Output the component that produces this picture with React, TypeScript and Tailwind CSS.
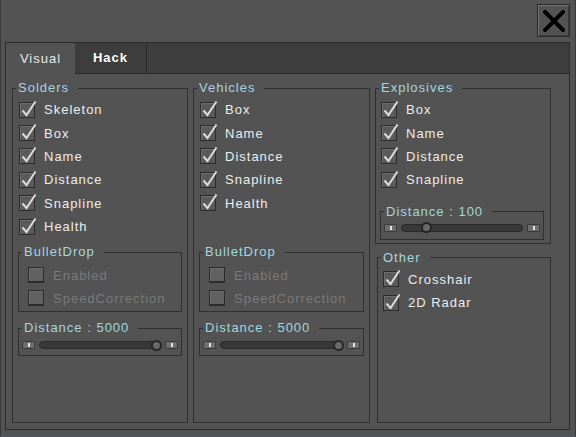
import type { ReactNode } from "react";

const font = { fontFamily: '"Liberation Sans", Arial, sans-serif' };

function Check({ label, checked = true, disabled = false }: { label: string; checked?: boolean; disabled?: boolean }) {
  return (
    <div className="flex items-center h-[23.4px] pl-[1px]">
      <div
        className={`relative w-[16px] h-[16px] border border-[#2c2c2c] ${disabled ? "bg-[#616161] border-b-2" : "bg-[#5a5a5a]"} shadow-[inset_1px_1px_0_#6e6e6e]`}
      >
        {checked && (
          <svg className="absolute left-0 top-0 overflow-visible" width="16" height="16" viewBox="0 0 16 16">
            <path d="M2.5 7.5 L6.5 12 L15.5 -1.5" fill="none" stroke="#dcdcdc" strokeWidth="2" />
          </svg>
        )}
      </div>
      <span className={`ml-[9px] text-[13px] tracking-[1px] leading-none ${disabled ? "text-[#7a7a7a]" : "text-[#ededed]"}`}>
        {label}
      </span>
    </div>
  );
}

function Group({ title, className = "", inner = "", children }: { title: string; className?: string; inner?: string; children: ReactNode }) {
  return (
    <fieldset className={`border border-[#303030] ${className}`}>
      <legend className="ml-[3px] pl-[2px] pr-[9px] text-[13px] leading-[16px] tracking-[1px] text-[#a3d6de]">{title}</legend>
      <div className={inner}>{children}</div>
    </fieldset>
  );
}

function EndButton() {
  return (
    <div className="w-[13px] h-[8px] bg-[#6e6e6e] border border-[#3a3a3a] rounded-[1px] flex items-center justify-center">
      <div className="w-[2px] h-[4px] bg-[#e4e4e4]" />
    </div>
  );
}

function Slider({ pos }: { pos: number }) {
  return (
    <div className="flex items-center h-[12px] px-[3px]">
      <EndButton />
      <div className="relative flex-1 mx-[4px] h-[8px] rounded-full bg-[#383838] border border-[#2a2a2a]">
        <div
          className="absolute top-1/2 w-[11px] h-[11px] -mt-[5.5px] -ml-[5.5px] rounded-full bg-[#6a6a6a] border-2 border-[#262626]"
          style={{ left: `${pos}%` }}
        />
      </div>
      <EndButton />
    </div>
  );
}

function BulletDrop() {
  return (
    <Group title="BulletDrop" className="mt-[6px]" inner="px-[8px] pt-[3px] pb-[1px]">
      <Check label="Enabled" checked={false} disabled />
      <Check label="SpeedCorrection" checked={false} disabled />
    </Group>
  );
}

function DistanceBox({ label, pos, className = "mt-[8px]", inner = "pt-[3px] pb-[4px]" }: { label: string; pos: number; className?: string; inner?: string }) {
  return (
    <Group title={label} className={className} inner={inner}>
      <Slider pos={pos} />
    </Group>
  );
}

export default function App() {
  return (
    <div className="w-[576px] h-[437px] bg-[#535353] border-l border-r border-[#3a3a3a] border-b-2 border-b-[#4c5862] flex flex-col" style={font}>
      <div className="h-[42px] flex justify-end items-start pt-[4px] pr-[5px]">
        <div className="w-[33px] h-[33px] border border-[#2a2a2a] shadow-[inset_1px_1px_0_#727272,inset_-1px_-1px_0_#3a3a3a] flex items-center justify-center">
          <svg width="22" height="22" viewBox="0 0 22 22">
            <path d="M2 2 L20 20 M20 2 L2 20" stroke="#000" strokeWidth="4" strokeLinecap="square" />
          </svg>
        </div>
      </div>
      <div className="ml-[4px] mr-[5px] h-[388px] border border-[#2b2b2b] flex flex-col">
        <div className="h-[31px] flex bg-[#3d3d3d]">
          <div className="w-[69px] bg-[#535353] flex items-center justify-center text-[13px] tracking-[1px] text-[#e8e8e8]">Visual</div>
          <div className="w-[72px] border-r border-b border-[#2b2b2b] flex items-center justify-center text-[13px] font-bold tracking-[1px] text-white">Hack</div>
          <div className="flex-1 border-b border-[#2b2b2b]" />
        </div>
        <div className="flex-1 flex pl-[6px] pt-[6px] pb-[6px] gap-[5px]">
          <Group title="Solders" className="w-[176px]" inner="px-[5px] pt-[2px]">
            <Check label="Skeleton" />
            <Check label="Box" />
            <Check label="Name" />
            <Check label="Distance" />
            <Check label="Snapline" />
            <Check label="Health" />
            <BulletDrop />
            <DistanceBox label="Distance : 5000" pos={97} />
          </Group>
          <Group title="Vehicles" className="w-[177px]" inner="px-[5px] pt-[2px]">
            <Check label="Box" />
            <Check label="Name" />
            <Check label="Distance" />
            <Check label="Snapline" />
            <Check label="Health" />
            <div className="h-[23.4px]" />
            <BulletDrop />
            <DistanceBox label="Distance : 5000" pos={97} />
          </Group>
          <div className="w-[176px] flex flex-col">
            <Group title="Explosives" inner="px-[4px] pt-[2px] pb-[3px]">
              <Check label="Box" />
              <Check label="Name" />
              <Check label="Distance" />
              <Check label="Snapline" />
              <DistanceBox label="Distance : 100" pos={20} className="mt-[12px] mr-[2px]" inner="pt-[2px] pb-[5px]" />
            </Group>
            <Group title="Other" className="flex-1 mt-[6px] ml-[2px]" inner="px-[4px] pt-[2px]">
              <Check label="Crosshair" />
              <Check label="2D Radar" />
            </Group>
          </div>
        </div>
      </div>
    </div>
  );
}
